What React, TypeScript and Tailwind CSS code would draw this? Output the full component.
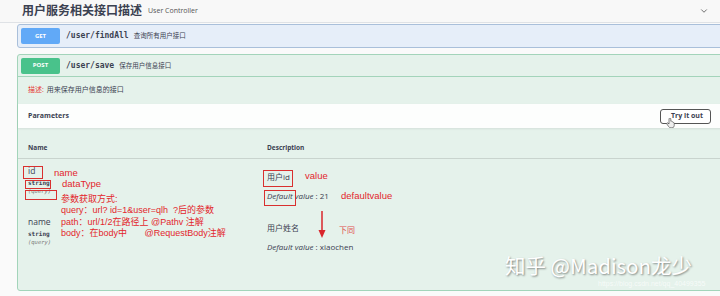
import { ChevronDown } from 'lucide-react'

const cjk = "font-['Open_Sans','Noto_Sans_CJK_SC',sans-serif]"
const mono = "font-['DejaVu_Sans_Mono','Liberation_Mono',monospace]"
const note = "font-['Liberation_Sans','Noto_Sans_CJK_SC',sans-serif] text-[#e3262b]"

type Param = {
  name: string
  type: string
  desc: string
  def: string
}

const params: Param[] = [
  { name: 'id', type: 'string', desc: '用户id', def: '21' },
  { name: 'name', type: 'string', desc: '用户姓名', def: 'xiaochen' },
]

function Badge({ label, color }: { label: string; color: string }) {
  return (
    <div
      className={`w-[39px] h-[16px] rounded-[2px] flex items-center justify-center text-white text-[6px] font-bold ${color}`}
    >
      {label}
    </div>
  )
}

// red marks drawn on top of the screenshot
function Annotations() {
  return (
    <div className="pointer-events-none absolute inset-0">
      <div className="absolute left-[23px] top-[166px] w-[20px] h-[13px] border border-[#d9302f]" />
      <div className="absolute left-[25px] top-[180px] w-[26px] h-[9px] border border-[#d9302f]" />
      <div className="absolute left-[25px] top-[190px] w-[32px] h-[10px] border border-[#d9302f]" />
      <div className="absolute left-[263px] top-[170px] w-[30px] h-[17px] border border-[#d9302f]" />
      <div className="absolute left-[264px] top-[190px] w-[32px] h-[16px] border border-[#d9302f]" />

      <div className={`absolute left-[54px] top-[167px] text-[9.5px] leading-[12px] ${note}`}>name</div>
      <div className={`absolute left-[62px] top-[178px] text-[9.5px] leading-[12px] ${note}`}>dataType</div>
      <div className={`absolute left-[61px] top-[194px] text-[9px] leading-[11.3px] ${note}`}>
        <div>参数获取方式:</div>
        <div>query：url?&nbsp;id=1&amp;user=qlh&nbsp;&nbsp;?后的参数</div>
        <div>path：url/1/2在路径上 @Pathv 注解</div>
        <div>body：在body中&nbsp;&nbsp;&nbsp;&nbsp;&nbsp;&nbsp;&nbsp;@RequestBody注解</div>
      </div>
      <div className={`absolute left-[305px] top-[170px] text-[9.5px] leading-[12px] ${note}`}>value</div>
      <div className={`absolute left-[341px] top-[190px] text-[9.5px] leading-[12px] ${note}`}>defaultvalue</div>
      <div className="absolute left-[339px] top-[224px] text-[8px] leading-[12px] text-[#e05050] font-['Noto_Sans_CJK_SC',sans-serif]">
        下同
      </div>

      <svg className="absolute left-[317px] top-[211px]" width="10" height="28" viewBox="0 0 10 28">
        <line x1="5" y1="0" x2="5" y2="22" stroke="#d9262b" strokeWidth="1.5" />
        <path d="M1.5 19 L5 27 L8.5 19 Z" fill="#d9262b" />
      </svg>

      <svg className="absolute left-[666px] top-[118px]" width="9" height="10" viewBox="0 0 9 10">
        <path
          d="M3 1 v5 l-1 -1 q-1.2 -0.6 -1.4 0.6 l2 3 q0.8 1.2 2.4 1.2 h1 q2 0 2.2 -2 v-2.6 q0 -0.9 -0.9 -0.8 q-0.3 -0.9 -1.2 -0.7 q-0.4 -0.8 -1.3 -0.5 v-2.2 q0 -1 -0.9 -1 q-0.9 0 -0.9 1 z"
          fill="#eeeeee"
          stroke="#555"
          strokeWidth="0.7"
        />
      </svg>

      <div className="absolute left-[505px] top-[252px] text-[20.5px] leading-[26px] text-white [text-shadow:1px_1px_2px_rgba(0,0,0,0.45)] font-['Noto_Sans_CJK_SC',sans-serif]">
        知乎 @Madison龙少
      </div>
      <div className="absolute left-[598px] top-[279px] text-[7px] leading-[10px] text-white/70 font-['Liberation_Sans',sans-serif]">
        https://blog.csdn.net/qq_40499355
      </div>
    </div>
  )
}

export default function App() {
  return (
    <div className={`relative w-[720px] h-[296px] overflow-hidden bg-[#fafafa] text-[#3b4151] ${cjk}`}>
      <div className="h-[23px] flex items-center pl-[22px] pr-[11px] border-b border-[#dfe2e6] bg-[#f8f8f8]">
        <span className="text-[12px] font-bold leading-[16px] text-[#3b4151]">用户服务相关接口描述</span>
        <span className="ml-[6px] text-[7px] leading-[10px] text-[#555]">User Controller</span>
        <ChevronDown className="ml-auto h-[10px] w-[10px] text-[#555]" strokeWidth={2} />
      </div>

      <div className="ml-[17px] w-[720px] mt-[1px]">
        <div className="h-[24px] flex items-center px-[3px] border border-[#a9bfda] bg-[#e6eef9] rounded-[3px]">
          <Badge label="GET" color="bg-[#61a9f7]" />
          <span className={`ml-[6px] text-[8px] font-bold ${mono}`}>/user/findAll</span>
          <span className="ml-[5px] text-[6.5px]">查询所有用户接口</span>
        </div>

        <div className="mt-[6px] h-[237px] border border-[#a3d4ba] bg-[#e5f2eb] rounded-[3px]">
          <div className="h-[22px] flex items-center px-[3px] border-b border-[#a3d4ba]">
            <Badge label="POST" color="bg-[#49c28b]" />
            <span className={`ml-[6px] text-[8px] font-bold ${mono}`}>/user/save</span>
            <span className="ml-[5px] text-[6.5px]">保存用户信息接口</span>
          </div>

          <div className="h-[27px] flex items-center pl-[10px] text-[7px]">
            <span className="text-[#e53935]">描述:</span>
            <span className="ml-[3px]">用来保存用户信息的接口</span>
          </div>

          <div className="h-[24px] flex items-center pl-[10px] pr-[25px] bg-[#fdfefd] shadow-[0_1px_2px_rgba(0,0,0,0.08)]">
            <span className="text-[7px] font-bold">Parameters</span>
            <button className="ml-auto w-[51px] h-[15px] rounded-[3px] border-[1.5px] border-[#555] bg-white text-[7px] font-bold text-[#3b4151] flex items-center justify-center pl-[3px]">
              Try it out
            </button>
          </div>

          <div className="pr-[4px]">
            <div className="h-[31px] pt-[14px] pl-[10px] flex border-b border-[#c9d4ce] text-[6.5px] font-bold leading-[12px]">
              <div className="w-[239px]">Name</div>
              <div>Description</div>
            </div>
            {params.map((p) => (
              <div key={p.name} className="h-[51px] pl-[10px] flex">
                <div className="w-[239px] pt-[6px]">
                  <div className="text-[8.5px] leading-[12px]">{p.name}</div>
                  <div className={`mt-[1px] text-[6px] leading-[9px] font-bold ${mono}`}>{p.type}</div>
                  <div className={`text-[5.5px] leading-[9px] italic text-[#777] ${mono}`}>(query)</div>
                </div>
                <div className="pt-[12px] text-[8px] leading-[12px]">
                  <div>{p.desc}</div>
                  <div className="mt-[7px]">
                    <i>Default value</i> : {p.def}
                  </div>
                </div>
              </div>
            ))}
          </div>
        </div>
      </div>

      <Annotations />
    </div>
  )
}
